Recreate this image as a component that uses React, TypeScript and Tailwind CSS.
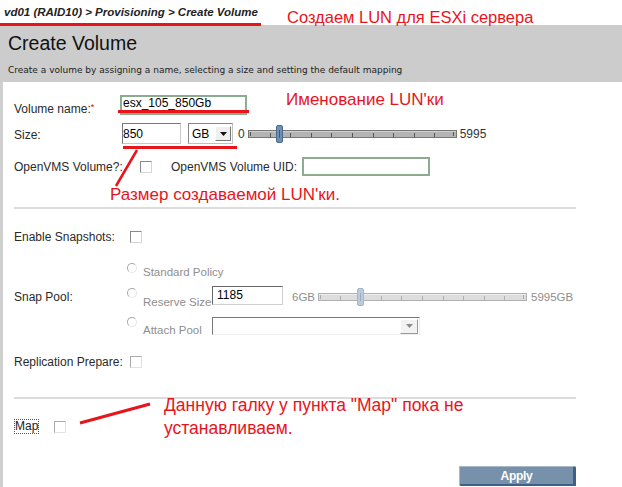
import React from "react";

const Checkbox = ({ light = false }: { light?: boolean }) => (
  <div
    className={
      light
        ? "w-[12px] h-[12px] bg-white border border-t-[#aaaaaa] border-l-[#aaaaaa] border-r-[#e2e2e2] border-b-[#e2e2e2]"
        : "w-[12px] h-[12px] bg-white border border-t-[#8a8a8a] border-l-[#8a8a8a] border-r-[#d6d6d6] border-b-[#d6d6d6]"
    }
  />
);

const Radio = () => (
  <div className="w-[10px] h-[10px] rounded-full bg-white border border-t-[#a8a8a8] border-l-[#a8a8a8] border-r-[#e6e6e6] border-b-[#e6e6e6]" />
);

const Slider = ({ active, thumbX }: { active: boolean; thumbX: number }) => {
  const w = 209;
  const ticks = Array.from({ length: 9 }, (_, i) => 1 + (i + 1) * 20.6);
  return (
    <svg width={w} height={18} viewBox={`0 0 ${w} 18`} className="block">
      <rect
        x={0.5}
        y={5.5}
        width={w - 1}
        height={7}
        fill={active ? "#b4b4b4" : "#dddddd"}
        stroke={active ? "#767676" : "#b0b0b0"}
      />
      <line x1={1} y1={6.5} x2={w - 1} y2={6.5} stroke={active ? "#d0d0d0" : "#eeeeee"} />
      <line x1={2.5} y1={7} x2={2.5} y2={11} stroke={active ? "#555" : "#aaa"} />
      <line x1={w - 3.5} y1={7} x2={w - 3.5} y2={11} stroke={active ? "#555" : "#aaa"} />
      {ticks.map((t, i) => (
        <line key={i} x1={Math.round(t) + 0.5} y1={8} x2={Math.round(t) + 0.5} y2={12} stroke={active ? "#555" : "#b0b0b0"} />
      ))}
      <rect
        x={thumbX + 0.5}
        y={0.5}
        width={6}
        height={17}
        rx={1.5}
        fill={active ? "#6f90b2" : "#bccbdb"}
        stroke={active ? "#4a6a8d" : "#a4b6c9"}
      />
      <line
        x1={thumbX + 3.5}
        y1={5}
        x2={thumbX + 3.5}
        y2={13}
        stroke={active ? "#3d5a7a" : "#98abbf"}
      />
    </svg>
  );
};

const Label = ({ children, className = "" }: { children: React.ReactNode; className?: string }) => (
  <div className={"text-[12px] leading-[14px] text-[#2a2a2a] whitespace-nowrap " + className}>{children}</div>
);

const Gray = ({ children, className = "" }: { children: React.ReactNode; className?: string }) => (
  <div className={"text-[11.5px] leading-[14px] text-[#8e8e8e] whitespace-nowrap " + className}>{children}</div>
);

export default function App() {
  const red = "text-[#e8141c]";
  return (
    <div className="relative w-[622px] h-[487px] overflow-hidden bg-white font-['Liberation_Sans',Arial,sans-serif] text-[#222]">
      {/* breadcrumb */}
      <div className="h-[25px] pl-[4px] pt-[5px] text-[11.5px] font-bold italic leading-[14px] text-[#222] whitespace-nowrap">
        vd01 (RAID10) &gt; Provisioning &gt; Create Volume
      </div>

      {/* header */}
      <div className="h-[57px] bg-[#cccccc] pl-[8px]">
        <div className="pt-[7px] text-[19.5px] leading-[22px] text-[#111]">Create Volume</div>
        <div className="mt-[11px] font-['DejaVu_Sans',Verdana,sans-serif] text-[9px] leading-[10px] text-[#222] whitespace-nowrap">
          Create a volume by assigning a name, selecting a size and setting the default mapping
        </div>
      </div>

      {/* body */}
      <div className="flex h-[405px]">
        <div className="w-[3px] bg-[#cfcfcf]" />
        <div className="w-[562px] ml-[11px] flex flex-col">
          {/* Volume name */}
          <div className="mt-[13px] flex items-start h-[20px]">
            <Label className="w-[106px] mt-[7px]">
              Volume name:<span className="text-[#e00000] text-[9px] align-top leading-[10px]">*</span>
            </Label>
            <div className="w-[127px] h-[20px] border-2 border-[#8cab8f] pl-[1px] text-[12px] leading-[12px] text-black">
              esx_105_850Gb
            </div>
          </div>

          {/* Size */}
          <div className="mt-[8px] flex items-center h-[21px]">
            <Label className="w-[108px] mt-[3px]">Size:</Label>
            <div className="w-[59px] h-[21px] border border-t-[#777] border-l-[#777] border-r-[#c8c8c8] border-b-[#c8c8c8] flex items-center pl-[0px] text-[12px] text-black">
              850
            </div>
            <div className="ml-[7px] w-[45px] h-[21px] border border-t-[#888] border-l-[#888] border-r-[#c0c0c0] border-b-[#c0c0c0] flex items-center pl-[3px] text-[12px] text-black">
              GB
              <div className="ml-[6px] w-[16px] h-[15px] bg-[#efefef] border border-t-[#ffffff] border-l-[#ffffff] border-r-[#777] border-b-[#777] flex items-center justify-center">
                <svg width="7" height="4" viewBox="0 0 7 4">
                  <path d="M0 0h7L3.5 4z" fill="#111" />
                </svg>
              </div>
            </div>
            <div className="ml-[5px] text-[12px] text-[#333]">0</div>
            <div className="ml-[3px]">
              <Slider active thumbX={28} />
            </div>
            <div className="ml-[3px] text-[12px] text-[#333]">5995</div>
          </div>

          {/* OpenVMS */}
          <div className="mt-[13px] flex items-center h-[19px]">
            <Label className="w-[126px]">OpenVMS Volume?:</Label>
            <Checkbox />
            <Label className="ml-[19px] w-[131px]">OpenVMS Volume UID:</Label>
            <div className="w-[128px] h-[19px] border-2 border-[#8cab8f]" />
          </div>

          <div className="mt-[31px] h-[2px] bg-[#dcdcdc]" />

          {/* Enable Snapshots */}
          <div className="mt-[21px] flex items-center h-[14px]">
            <Label className="w-[116px]">Enable Snapshots:</Label>
            <Checkbox />
          </div>

          {/* Snap Pool */}
          <div className="mt-[19px] flex items-start">
            <Label className="w-[113px] mt-[27px]">Snap Pool:</Label>
            <div className="flex flex-col">
              <div className="flex items-start h-[16px]">
                <Radio />
                <Gray className="ml-[6px] mt-[2px]">Standard Policy</Gray>
              </div>
              <div className="mt-[7px] flex items-start h-[19px]">
                <div className="mt-[2px]">
                  <Radio />
                </div>
                <Gray className="ml-[6px] mt-[9px] w-[69px]">Reserve Size</Gray>
                <div className="w-[71px] h-[19px] border border-t-[#666] border-l-[#666] border-r-[#d0d0d0] border-b-[#d0d0d0] pl-[4px] text-[12px] leading-[16px] text-black">
                  1185
                </div>
                <Gray className="ml-[9px] mt-[4px] w-[26px]">6GB</Gray>
                <div className="mt-[2px]">
                  <Slider active={false} thumbX={39} />
                </div>
                <Gray className="ml-[4px] mt-[4px]">5995GB</Gray>
              </div>
              <div className="mt-[12px] flex items-start h-[18px]">
                <div className="mt-[0px]">
                  <Radio />
                </div>
                <Gray className="ml-[6px] mt-[6px] w-[69px]">Attach Pool</Gray>
                <div className="w-[208px] h-[18px] border border-t-[#777] border-l-[#777] border-r-[#eeeeee] border-b-[#eeeeee] flex justify-end items-center pr-[1px]">
                  <div className="w-[18px] h-[15px] bg-[#f2f2f2] border border-t-[#ffffff] border-l-[#ffffff] border-r-[#999] border-b-[#999] flex items-center justify-center">
                    <svg width="7" height="4" viewBox="0 0 7 4">
                      <path d="M0 0h7L3.5 4z" fill="#8a8a8a" />
                    </svg>
                  </div>
                </div>
              </div>
            </div>
          </div>

          {/* Replication Prepare */}
          <div className="mt-[21px] flex items-center h-[12px]">
            <Label className="w-[116px]">Replication Prepare:</Label>
            <Checkbox light />
          </div>

          <div className="mt-[29px] h-[2px] bg-[#dcdcdc]" />

          {/* Map */}
          <div className="mt-[21px] flex items-center h-[13px]">
            <div className="border border-dotted border-[#555] px-[0px] text-[12px] leading-[13px] text-[#222]">Map</div>
            <div className="ml-[15px]">
              <Checkbox light />
            </div>
          </div>

          {/* Apply */}
          <div className="mt-[33px] flex justify-end">
            <div className="w-[117px] h-[20px] bg-[#7791ab] border-r-[3px] border-b-[2px] border-r-[#3e6088] border-b-[#3e6088] border-t border-l border-t-[#a7b8c9] border-l-[#a7b8c9] rounded-tr-[2px] rounded-bl-[2px] flex items-center justify-center text-white font-bold text-[12px] tracking-[-0.3px]">
              Apply
            </div>
          </div>
        </div>
      </div>

      {/* annotations */}
      <div className="absolute left-0 top-[23px] w-[261px] h-[3px] bg-[#e8141c]" />
      <div className={`absolute left-[287px] top-[7px] text-[16.5px] leading-[20px] whitespace-nowrap ${red}`}>
        Создаем LUN для ESXi сервера
      </div>
      <div className="absolute left-[118px] top-[110px] w-[131px] h-[3px] bg-[#e8141c]" />
      <div className={`absolute left-[286px] top-[90px] text-[17px] leading-[20px] whitespace-nowrap ${red}`}>
        Именование LUN'ки
      </div>
      <div className="absolute left-[123px] top-[146px] w-[114px] h-[2.5px] bg-[#e8141c]" />
      <svg className="absolute left-0 top-0 pointer-events-none" width="622" height="487">
        <line x1="137" y1="150" x2="116" y2="186" stroke="#e8141c" strokeWidth="2.5" />
        <line x1="80" y1="423" x2="150" y2="404" stroke="#e8141c" strokeWidth="3" />
      </svg>
      <div className={`absolute left-[110px] top-[185px] text-[17px] leading-[20px] whitespace-nowrap ${red}`}>
        Размер создаваемой LUN'ки.
      </div>
      <div className={`absolute left-[164px] top-[394px] text-[17.5px] leading-[23px] whitespace-nowrap ${red}`}>
        Данную галку у пункта "Map" пока не
        <br />
        устанавливаем.
      </div>
    </div>
  );
}
